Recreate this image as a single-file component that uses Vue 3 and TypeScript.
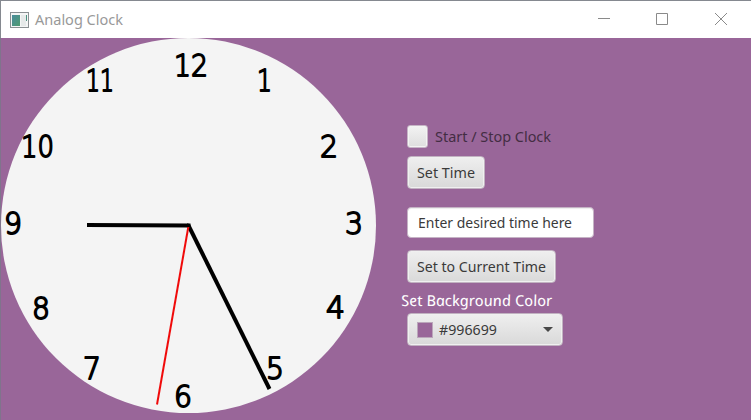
<script setup lang="ts">
import { ref } from 'vue'

interface Numeral {
  label: string
  x: number
  y: number
  width: number
}

// x and y give the left end of each numeral's baseline on the dial
const numerals: Numeral[] = [
  { label: '12', x: 174, y: 37.5, width: 34 },
  { label: '1', x: 257, y: 52.5, width: 15 },
  { label: '2', x: 320, y: 118.5, width: 18 },
  { label: '3', x: 345, y: 195.5, width: 18 },
  { label: '4', x: 326, y: 280, width: 19 },
  { label: '5', x: 266, y: 340.5, width: 18 },
  { label: '6', x: 174, y: 368.5, width: 18 },
  { label: '7', x: 83, y: 340.5, width: 18 },
  { label: '8', x: 32, y: 280.5, width: 18 },
  { label: '9', x: 4, y: 195.5, width: 18 },
  { label: '10', x: 21, y: 118.5, width: 33 },
  { label: '11', x: 86, y: 52.5, width: 28 },
]

const running = ref(false)
const color = ref('#996699')
</script>

<template>
  <div class="window">
    <header class="titlebar">
      <svg class="app-icon" width="19" height="16" viewBox="0 0 19 16">
        <defs>
          <linearGradient id="pane" x1="0" y1="0" x2="1" y2="1">
            <stop offset="0" stop-color="#4a8c9c" />
            <stop offset="1" stop-color="#4f9b70" />
          </linearGradient>
        </defs>
        <rect x=".5" y=".5" width="18" height="15" fill="#f4f5f5" stroke="#8b9093" />
        <rect x="2" y="3" width="8" height="11" fill="url(#pane)" />
        <rect x="11" y="3" width="5" height="11" fill="#e6e9e9" />
        <rect x="16" y="3" width="1" height="6" fill="#4b9180" />
      </svg>
      <svg class="title" width="90" height="20">
        <text x="0" y="15" textLength="88" lengthAdjust="spacingAndGlyphs">Analog Clock</text>
      </svg>
      <svg class="controls" width="132" height="14" viewBox="0 0 132 14">
        <path d="M0 5.5H12M58.5 .5h11v11h-11zM117 0l12 12M129 0l-12 12" />
      </svg>
    </header>

    <main class="content">
      <svg class="clock" width="375" height="382" viewBox="1 0 375 382">
        <circle cx="188.5" cy="187.5" r="187.5" fill="#f4f4f4" />
        <text
          v-for="n in numerals"
          :key="n.label"
          class="numeral"
          :x="n.x"
          :y="n.y"
          :textLength="n.width"
          lengthAdjust="spacingAndGlyphs"
        >{{ n.label }}</text>
        <path class="hand" d="M188.5 187.5L87 187" />
        <path class="hand" d="M188.5 187.5L269.5 351" />
        <path class="second" d="M188.5 188L157 366.5" />
        <rect x="187" y="185.5" width="3.5" height="3.5" />
      </svg>

      <section class="panel">
        <label class="check">
          <input v-model="running" type="checkbox" />
          <svg width="120" height="22">
            <text x="0" y="16" textLength="116" lengthAdjust="spacingAndGlyphs">Start / Stop Clock</text>
          </svg>
        </label>
        <button class="button set-time">
          <svg width="60" height="22">
            <text x="0" y="16" textLength="58" lengthAdjust="spacingAndGlyphs">Set Time</text>
          </svg>
        </button>
        <div class="field">
          <svg width="170" height="22">
            <text x="0" y="16" textLength="154" lengthAdjust="spacingAndGlyphs">Enter desired time here</text>
          </svg>
        </div>
        <button class="button set-current">
          <svg width="138" height="22">
            <text x="0" y="16" textLength="129" lengthAdjust="spacingAndGlyphs">Set to Current Time</text>
          </svg>
        </button>
        <svg class="caption" width="160" height="22">
          <text x="-2" y="16" textLength="151" lengthAdjust="spacingAndGlyphs">Set Background Color</text>
        </svg>
        <button class="button picker">
          <span class="swatch" :style="{ background: color }"></span>
          <svg width="64" height="22">
            <text x="0" y="16" textLength="58" lengthAdjust="spacingAndGlyphs">{{ color }}</text>
          </svg>
          <svg class="arrow" width="10" height="5"><path d="M0 0h10L5 5z" fill="#484848" /></svg>
        </button>
      </section>
    </main>
  </div>
</template>

<style>
body {
  overflow: hidden;
}
</style>

<style scoped>
.window {
  box-sizing: border-box;
  width: 751px;
  height: 420px;
  border-top: 1px solid #858990;
  background: #996699;
  box-shadow: inset 1px 0 #80748c;
  font-family: 'Noto Sans', sans-serif;
  font-size: 15px;
}
svg {
  display: block;
  flex: none;
  overflow: visible;
}
.titlebar {
  display: flex;
  align-items: center;
  box-sizing: border-box;
  height: 37px;
  padding: 0 21px 0 10px;
  background: #fff;
  border-left: 1px solid #858990;
}
.app-icon {
  margin-left: -1px;
}
.title {
  margin-left: 6px;
  fill: #999;
}
.controls {
  margin-left: auto;
  fill: none;
  stroke: #8a8a8a;
}
.content {
  display: flex;
  height: 382px;
  padding-left: 1px;
}
.clock {
  overflow: hidden;
}
.numeral {
  font-family: 'DejaVu Sans', sans-serif;
  font-size: 29.5px;
  font-weight: 200;
  fill: #000;
  stroke: #000;
  stroke-width: 1.8;
  stroke-linejoin: round;
}
.hand {
  stroke: #000;
  stroke-width: 4;
}
.second {
  stroke: #f00a0a;
  stroke-width: 2;
}
.panel {
  display: flex;
  flex-direction: column;
  align-items: flex-start;
  padding: 87px 0 0 31px;
  fill: #3a3a3a;
}
.check {
  display: flex;
  align-items: center;
  height: 23px;
  gap: 7px;
  fill: #432d43;
}
input {
  appearance: none;
  box-sizing: border-box;
  width: 21px;
  height: 23px;
  margin: 0;
  border: 1px solid #c6b5c6;
  border-radius: 3px;
  background: linear-gradient(#f3f3f3, #dedede);
  box-shadow: inset 0 0 0 1px #f3f3f3;
}
.button {
  display: flex;
  align-items: center;
  box-sizing: border-box;
  height: 33px;
  margin: 0;
  padding: 0 9px;
  border: 1px solid #c1b2c1;
  border-radius: 4px;
  background: linear-gradient(#efefef, #d9d9d9);
  box-shadow: inset 0 0 0 1px #f0f0f0;
  fill: #3a3a3a;
  font: inherit;
}
.set-time {
  width: 78px;
  margin-top: 8px;
}
.field {
  display: flex;
  align-items: center;
  box-sizing: border-box;
  width: 187px;
  height: 31px;
  margin-top: 18px;
  padding-left: 10px;
  border: 1px solid #c5b3c5;
  border-radius: 4px;
  background: #fff;
  box-shadow: inset 0 1px 1px #eee;
}
.set-current {
  width: 149px;
  margin-top: 12px;
}
.caption {
  margin: 7px 0 1px -6px;
  fill: #fff;
  font-size: 15px;
  font-style: italic;
}
.caption text {
  transform: skewX(11deg);
}
.picker {
  width: 156px;
}
.swatch {
  box-sizing: border-box;
  width: 16px;
  height: 16px;
  margin-right: 6px;
  border: 1px solid #bba7bb;
}
.arrow {
  margin-left: auto;
}
</style>
